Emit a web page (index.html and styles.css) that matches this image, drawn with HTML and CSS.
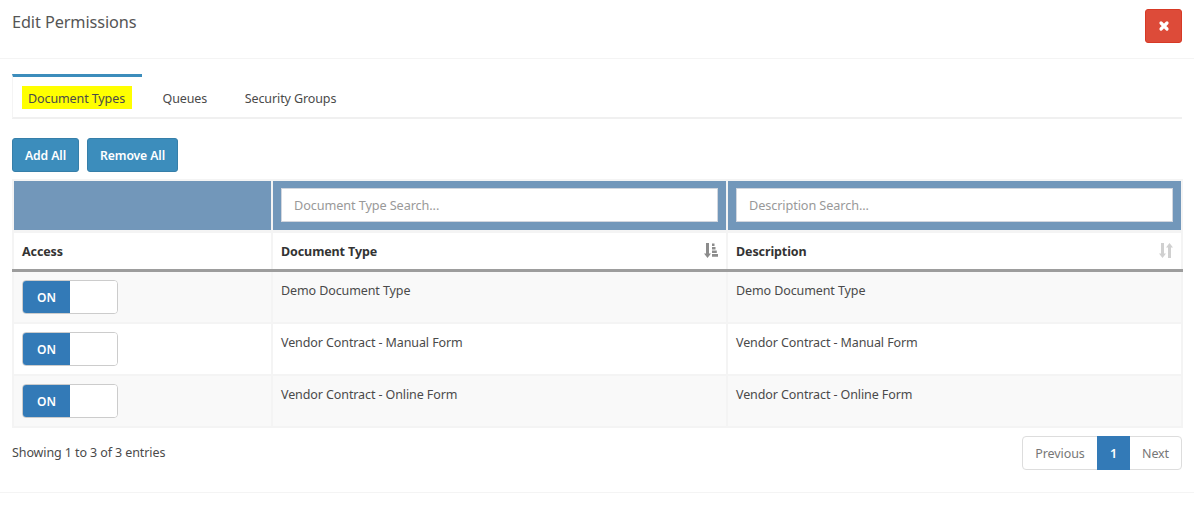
FILE: index.html
```html
<!DOCTYPE html>
<html lang="en">
<head>
<meta charset="utf-8">
<title>Edit Permissions</title>
<link rel="stylesheet" href="styles.css">
</head>
<body>
<header class="modal-header">
  <h4 class="modal-title">Edit Permissions</h4>
  <button class="close-btn" aria-label="Close">
    <svg viewBox="0 0 12 12" width="12" height="12"><path d="M3 3L9 9M9 3L3 9" stroke="#fff" stroke-width="3.2" stroke-linecap="round" fill="none"/></svg>
  </button>
</header>
<main class="modal-body">
  <nav class="tabs">
    <a class="tab active"><mark class="hl">Document Types</mark></a>
    <a class="tab">Queues</a>
    <a class="tab">Security Groups</a>
  </nav>
  <div class="actions">
    <button class="btn">Add All</button>
    <button class="btn">Remove All</button>
  </div>
  <table class="grid">
    <colgroup><col class="c1"><col class="c2"><col class="c3"></colgroup>
    <thead>
      <tr class="filters">
        <th></th>
        <th><input class="search" placeholder="Document Type Search..."></th>
        <th><input class="search" placeholder="Description Search..."></th>
      </tr>
      <tr class="heads">
        <th>Access</th>
        <th><div class="head-inner">Document Type
          <svg class="sort" viewBox="0 0 14 15" width="14" height="15"><path d="M2 0h3v10.5h2L3.5 15L0 10.5h2Z" fill="#8c8c8c"/><path d="M8 0.5h2.5V3H8zM8 4h3.5v2.5H8zM8 7.5h4.8V10H8zM8 11h6v2.8H8z" fill="#8c8c8c"/></svg></div></th>
        <th><div class="head-inner">Description
          <svg class="sort" viewBox="0 0 14 15" width="14" height="15"><path d="M2 0h3v10.5h2L3.5 15L0 10.5h2Z M9 15V4.5H7L10.5 0L14 4.5H12V15Z" fill="#d0d0d0"/></svg></div></th>
      </tr>
    </thead>
    <tbody>
      <tr class="odd">
        <td><div class="toggle"><span class="on">ON</span><span class="off"></span></div></td>
        <td>Demo Document Type</td><td>Demo Document Type</td>
      </tr>
      <tr>
        <td><div class="toggle"><span class="on">ON</span><span class="off"></span></div></td>
        <td>Vendor Contract - Manual Form</td><td>Vendor Contract - Manual Form</td>
      </tr>
      <tr class="odd">
        <td><div class="toggle"><span class="on">ON</span><span class="off"></span></div></td>
        <td>Vendor Contract - Online Form</td><td>Vendor Contract - Online Form</td>
      </tr>
    </tbody>
  </table>
  <div class="table-foot">
    <div class="info">Showing 1 to 3 of 3 entries</div>
    <div class="pager">
      <a class="pg prev">Previous</a><a class="pg cur">1</a><a class="pg next">Next</a>
    </div>
  </div>
</main>
<div class="modal-footer"></div>
</body>
</html>
```
FILE: styles.css
```css
* { box-sizing: border-box; }
html, body { margin: 0; padding: 0; background: #fff; }
body {
  font-family: "Noto Sans", "Liberation Sans", sans-serif;
  font-size: 12.5px;
  letter-spacing: -0.1px;
  color: #4a4a4a;
  height: 505px;
  overflow: hidden;
}
.modal-header {
  height: 59px;
  border-bottom: 1px solid #f4f4f4;
  padding: 9px 12px 0;
  display: flex;
  justify-content: space-between;
  align-items: flex-start;
}
.modal-title { margin: 2px 0 0; font-size: 16.3px; line-height: 22px; font-weight: 400; color: #555; }
.close-btn {
  width: 37px; height: 34px;
  background: #dd4b39; border: 1px solid #d73925; border-radius: 3px;
  padding: 0; display: flex; align-items: center; justify-content: center;
}
.modal-body { padding: 15px 12px 0; }
.tabs {
  display: flex; height: 45px;
  border-bottom: 2px solid #f0f0f0;
}
.tab { display: flex; align-items: center; color: #4a4a4a; padding: 0 19px 0 18.5px; margin-top: 3px; height: 42px; }
.tab.active {
  border-top: 3px solid #3c8dbc;
  margin-top: 0; height: 44px;
  padding: 0 9px;
  width: 130px;
  margin-right: 2px;
  border-left: 1px solid #f4f4f4;
}
.hl { background: #ff0; color: #4a4a4a; padding: 0 6px; height: 23px; line-height: 25px; display: block; width: 110px; white-space: nowrap; }
.actions { display: flex; gap: 8px; margin-top: 19px; height: 34px; }
.btn {
  font: 600 12.2px "Noto Sans", "Liberation Sans", sans-serif;
  letter-spacing: -0.1px;
  color: #fff; background: #3c8dbc; border: 1px solid #367fa9; border-radius: 3px;
  padding: 0 12px;
}
.grid {
  width: 1169px; margin-top: 7px;
  table-layout: fixed;
  border-collapse: collapse;
  border: 1px solid #f4f4f4;
}
.c1 { width: 259px; }
.c2 { width: 455px; }
.c3 { width: 455px; }
.grid th, .grid td { border: 2px solid #f4f4f4; text-align: left; vertical-align: top; }
.filters th { background: #7297ba; height: 51px; padding: 7px 8px 0; border-bottom: 3px solid #f4f4f4; }
.search {
  display: block; width: 100%; height: 34px;
  border: 1px solid #d2d6de; padding: 0 12px;
  font: 12.7px "Noto Sans", "Liberation Sans", sans-serif;
  letter-spacing: -0.1px;
  background: #fff;
}
.search::placeholder { color: #999; opacity: 1; }
.heads th {
  height: 39px; padding: 2px 8px 0; font-weight: 700; color: #333; vertical-align: middle;
  border-bottom: 3px solid #9d9d9d;
  background: #fff;
}
.head-inner { display: flex; justify-content: space-between; align-items: center; }
.sort { display: block; margin-top: -2px; }
tbody td { height: 52px; padding: 8px 8px 0; background: #fff; line-height: 22px; color: #4a4a4a; }
tbody tr:first-child td { height: 53px; }
tbody tr.odd td { background: #f9f9f9; }
.toggle {
  width: 96px; height: 34px; border: 1px solid #ccc; border-radius: 4px;
  display: flex; overflow: hidden; background: #fff;
}
.on {
  width: 47px; background: #337ab7; color: #fff; font-weight: 600; font-size: 12px;
  display: flex; align-items: center; justify-content: center; padding-top: 2px;
}
.off { flex: 1; background: #fff; }
.table-foot { display: flex; justify-content: space-between; align-items: flex-start; margin-top: 8px; }
.info { padding-top: 8px; line-height: 18px; }
.pager { display: flex; height: 34px; border: 1px solid #ddd; border-radius: 4px; }
.pg { display: flex; align-items: center; justify-content: center; color: #777; }
.prev { width: 74px; }
.cur { width: 33px; background: #337ab7; color: #fff; margin: -1px 0; font-weight: 600; }
.next { width: 51px; }
.modal-footer { border-top: 1px solid #f4f4f4; margin-top: 22px; }
```
